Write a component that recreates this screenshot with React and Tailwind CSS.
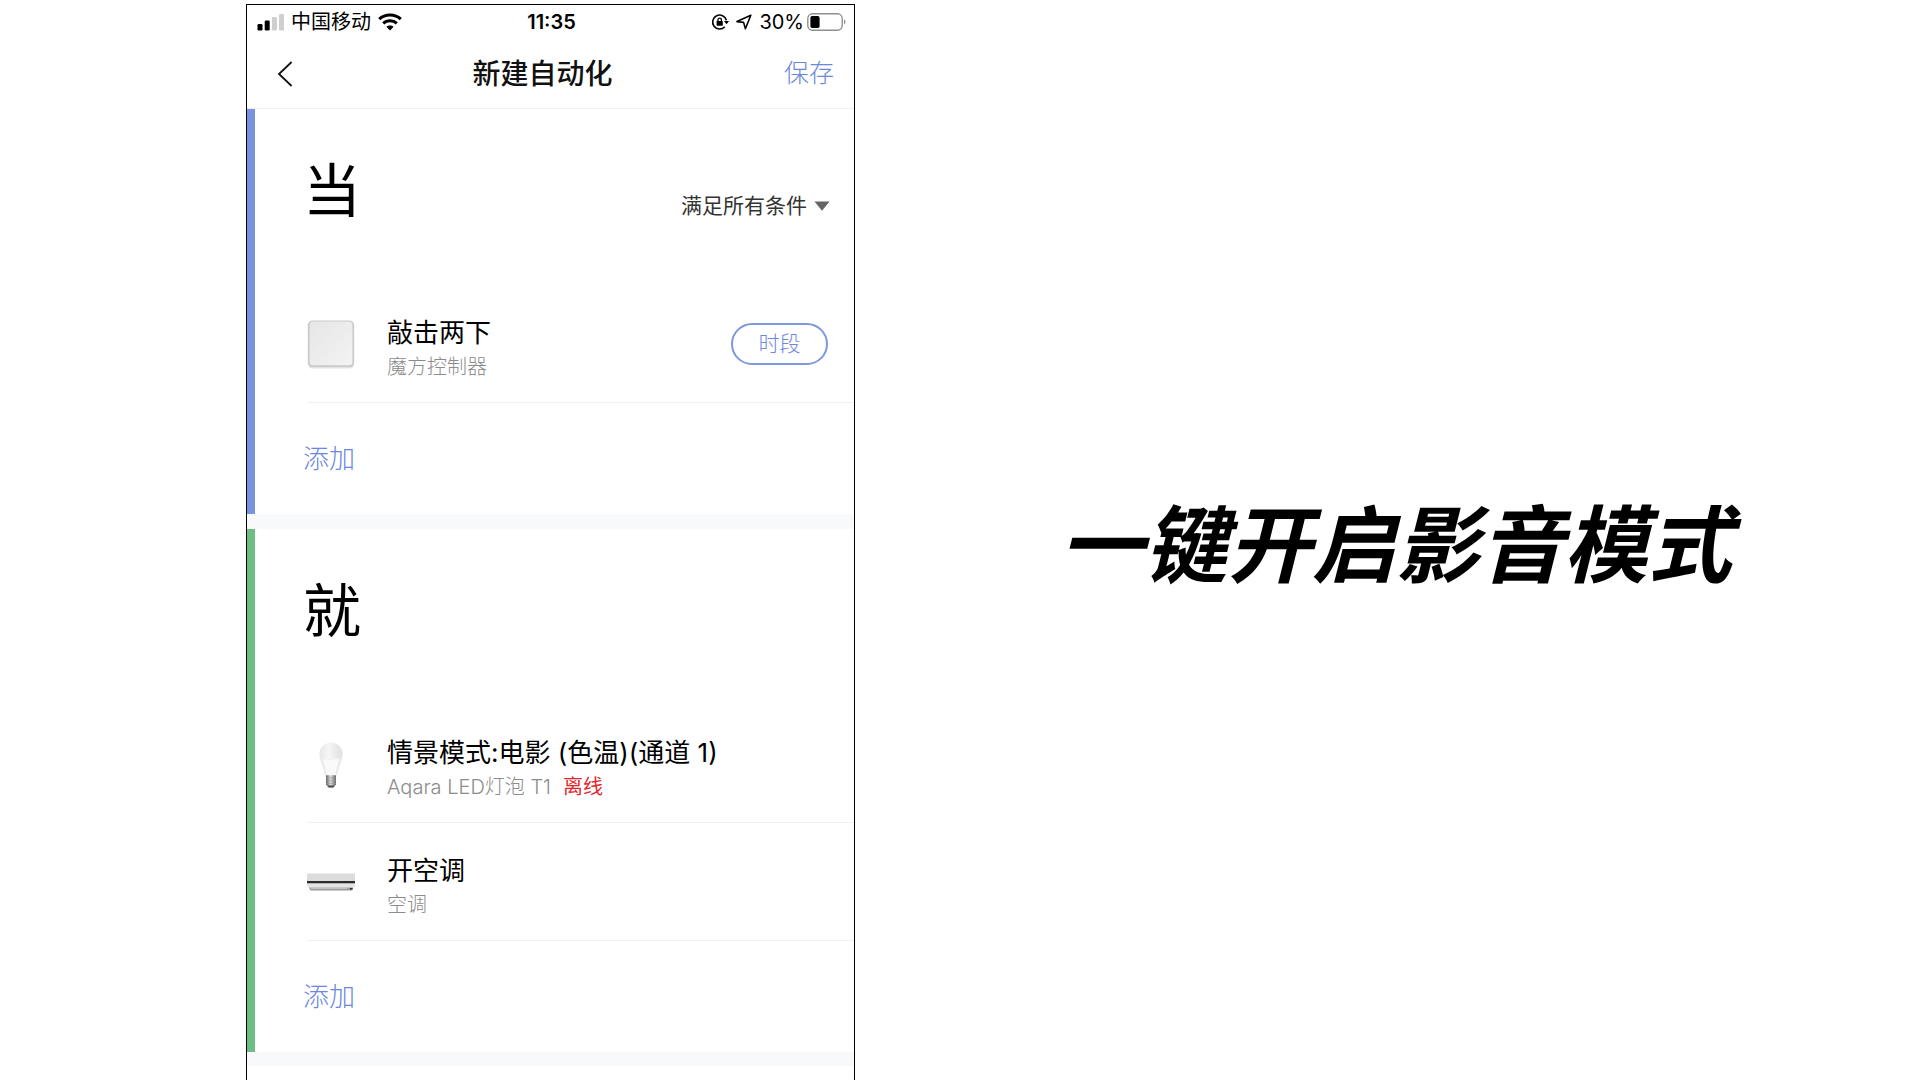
import React, { useState } from 'react';

const SignalIcon = () => (
  <svg width="27" height="18" viewBox="0 0 27 18" aria-hidden="true">
    <rect x="0.5" y="11" width="5" height="6.5" rx="1.2" fill="#000" />
    <rect x="7.7" y="7.5" width="5" height="10" rx="1.2" fill="#000" />
    <rect x="15" y="4" width="5" height="13.5" rx="1.2" fill="#cfcfcf" />
    <rect x="22" y="1" width="5" height="16.5" rx="1.2" fill="#cfcfcf" />
  </svg>
);

const WifiIcon = () => (
  <svg width="24" height="18" viewBox="0 0 24 18" fill="none" stroke="#000" strokeWidth="3" aria-hidden="true">
    <path d="M1.2 6.2 C7 0.6 17 0.6 22.8 6.2" />
    <path d="M5.2 10.4 C9 6.8 15 6.8 18.8 10.4" />
    <path d="M12 17.4 L8.4 13.8 C10.4 11.9 13.6 11.9 15.6 13.8 Z" fill="#000" stroke="none" />
  </svg>
);

const RotationLockIcon = () => (
  <svg width="18" height="18" viewBox="0 0 18 18" fill="none" stroke="#000" aria-hidden="true">
    <path d="M15.4 7.2 A7 7 0 1 0 13.8 13.8" strokeWidth="1.6" />
    <path d="M13 8 H18 L15.6 11.2 Z" fill="#000" stroke="none" />
    <rect x="5.6" y="8" width="6.2" height="4.8" rx="0.6" fill="#000" stroke="none" />
    <path d="M7 8.2 V6.8 A1.7 1.7 0 0 1 10.4 6.8 V8.2" strokeWidth="1.3" />
  </svg>
);

const LocationIcon = () => (
  <svg width="16" height="16" viewBox="0 0 16 16" fill="none" stroke="#000" strokeWidth="1.6" strokeLinejoin="round" aria-hidden="true">
    <path d="M14.8 1.2 L1 7.6 L7.6 8.4 L9.4 14.8 Z" />
  </svg>
);

const BatteryIcon = () => (
  <svg width="39" height="18" viewBox="0 0 39 18" aria-hidden="true">
    <rect x="0.8" y="0.8" width="34.4" height="16.4" rx="4.6" fill="none" stroke="#8f8f8f" strokeWidth="1.4" />
    <rect x="3.4" y="3" width="9.2" height="12" rx="1.8" fill="#000" />
    <path d="M37 6.6 C39 7.4 39 10.6 37 11.4 Z" fill="#8f8f8f" />
  </svg>
);

const CubeImage = () => (
  <svg width="48" height="50" viewBox="0 0 48 50" aria-hidden="true">
    <defs>
      <linearGradient id="cubeFace" x1="0" y1="0" x2="1" y2="1">
        <stop offset="0" stopColor="#e6e6e6" />
        <stop offset="1" stopColor="#f3f3f3" />
      </linearGradient>
    </defs>
    <rect x="1" y="3.5" width="46" height="46" rx="4.5" fill="#e2e2e2" />
    <rect x="0.8" y="1.6" width="46.4" height="46.4" rx="4.5" fill="#cbcbcb" />
    <rect x="2.6" y="2.6" width="42.8" height="43.6" rx="3.5" fill="url(#cubeFace)" />
  </svg>
);

const BulbImage = () => (
  <svg width="48" height="48" viewBox="0 0 48 48" aria-hidden="true">
    <defs>
      <linearGradient id="bulbGlass" x1="0" y1="0" x2="1" y2="0">
        <stop offset="0" stopColor="#e6e6e6" />
        <stop offset="0.4" stopColor="#f6f6f6" />
        <stop offset="1" stopColor="#dfdfdf" />
      </linearGradient>
      <linearGradient id="bulbBase" x1="0" y1="0" x2="1" y2="0">
        <stop offset="0" stopColor="#5c5c5c" />
        <stop offset="0.45" stopColor="#dedede" />
        <stop offset="1" stopColor="#666" />
      </linearGradient>
    </defs>
    <path d="M12.4 14.4 A11.6 12 0 0 1 35.6 14.4 L35 18 H13 Z" fill="url(#bulbGlass)" />
    <path d="M12.6 17 C18 19 30 19 35.4 17 C35 23 31.6 26 30.6 35.2 H17.6 C16.6 26 13 23 12.6 17 Z" fill="#ececec" />
    <path d="M16 19 C21 20 27 20 32 19 C31 25 29 28 28.6 35 H19.6 C19.2 28 17 25 16 19 Z" fill="#fafafa" />
    <path d="M19 35.2 H29 V44.2 L26.8 47.4 H21.2 L19 44.2 Z" fill="url(#bulbBase)" />
    <path d="M19 37.8 H29 M19 40.6 H29 M19 43.4 H29" stroke="#999" strokeWidth="0.6" />
    <path d="M20.6 45.6 H27.4 L26 47.6 H22 Z" fill="#444" />
  </svg>
);

const AirConditionerImage = () => (
  <svg width="48" height="18" viewBox="0 0 48 18" aria-hidden="true">
    <rect x="0" y="0.5" width="48" height="9" fill="#dcdcdc" />
    <rect x="0" y="8" width="48" height="2.6" fill="#2c2c2c" />
    <path d="M0 10.6 H48 V12.6 Q47.6 14.4 46 15 H2 Q0.4 14.4 0 12.6 Z" fill="#e4e4e4" />
    <path d="M2 14.4 H46 L45 17.6 H3.4 Z" fill="#9c9c9c" />
    <path d="M4 15.2 H40" stroke="#d4d4d4" strokeWidth="1" />
    <rect x="43" y="15" width="2.6" height="1.6" fill="#333" />
  </svg>
);

const whenItems = [
  { id: 'cube', title: '敲击两下', device: '魔方控制器', image: CubeImage, period: true },
];

const thenItems = [
  { id: 'bulb', title: '情景模式:电影 (色温)(通道 1)', device: 'Aqara LED灯泡 T1', image: BulbImage, offline: true },
  { id: 'ac', title: '开空调', device: '空调', image: AirConditionerImage },
];

const StatusBar = () => (
  <div className="grid h-[34px] grid-cols-[1fr_auto_1fr] items-center pr-2 pl-2.5 text-xl">
    <div className="flex items-center gap-[7px]">
      <SignalIcon />
      <span>中国移动</span>
      <WifiIcon />
    </div>
    <span className="font-semibold">11:35</span>
    <div className="flex items-center justify-end gap-[7px]">
      <RotationLockIcon />
      <LocationIcon />
      <div className="flex items-center gap-[3px]">
        <span>30%</span>
        <BatteryIcon />
      </div>
    </div>
  </div>
);

const NavBar = () => (
  <header className="flex h-[70px] items-center justify-between border-b border-[#f1f1f1] px-5">
    <button type="button" aria-label="返回" className="flex h-10 w-[34px] items-center justify-end pr-2">
      <svg width="16" height="26" viewBox="0 0 16 26" fill="none" stroke="#111" strokeWidth="1.8">
        <path d="M14.6 1 L2 13 L14.6 25" />
      </svg>
    </button>
    <h1 className="text-[28px] font-medium text-[#111]">新建自动化</h1>
    <button type="button" className="text-[25px] font-light text-[#6c87dc]">保存</button>
  </header>
);

const AutomationItem = ({ item }) => {
  const Image = item.image;
  return (
    <li className="ml-[52px] flex h-[118px] items-center border-b border-[#f1f1f1] pr-[26px]">
      <Image />
      <div className="ml-8 flex-1 pt-2.5">
        <p className="text-[26px] leading-9 text-black">{item.title}</p>
        <p className="text-xl leading-8 font-light text-[#8c8c8c]">
          {item.device}
          {item.offline && <span className="ml-3 font-normal text-[#e0282c]">离线</span>}
        </p>
      </div>
      {item.period && (
        <button type="button" className="h-[42px] w-[97px] rounded-full border-2 border-[#7f97dc] text-[21px] font-light text-[#6c87dc]">
          时段
        </button>
      )}
    </li>
  );
};

const AutomationSection = ({ heading, items, barColor, children }) => (
  <section className={`border-l-8 ${barColor}`}>
    <div className="flex h-[176px] items-start justify-between pt-12 pr-6 pl-12">
      <h2 className="text-[58px] leading-[68px] text-black">{heading}</h2>
      {children}
    </div>
    <ul>
      {items.map((item) => (
        <AutomationItem key={item.id} item={item} />
      ))}
    </ul>
    <div className="flex h-[111px] items-center pl-12">
      <button type="button" className="text-[26px] font-light text-[#6c87dc]">添加</button>
    </div>
  </section>
);

const App = () => {
  const [condition, setCondition] = useState('all');

  return (
    <div className="grid min-h-screen grid-cols-[246fr_609fr_1065fr] bg-white pt-1 font-[Inter,'Noto_Sans_CJK_SC',sans-serif] text-black">
      {/* Phone screen */}
      <div className="col-start-2 border-x border-t border-black">
        <StatusBar />
        <NavBar />
        <main>
          <AutomationSection heading="当" items={whenItems} barColor="border-[#7893e0]">
            <div className="mt-7 flex items-center gap-[7px]">
              <select
                aria-label="条件"
                value={condition}
                onChange={(e) => setCondition(e.target.value)}
                className="appearance-none text-[21px] leading-[42px] text-[#333]"
              >
                <option value="all">满足所有条件</option>
              </select>
              <svg width="16" height="10" viewBox="0 0 16 10" className="pointer-events-none" aria-hidden="true">
                <path d="M0.5 0.5 H15.5 L8 9.8 Z" fill="#666" />
              </svg>
            </div>
          </AutomationSection>
          <div className="h-[15px] bg-[#f8f9fb]" />
          <AutomationSection heading="就" items={thenItems} barColor="border-[#6cbf84]" />
          <div className="h-[14px] bg-[#f8f9fb]" />
        </main>
      </div>

      {/* Caption */}
      <div className="flex items-center justify-center pt-2 pl-4">
        <p className="text-[84px] leading-none font-bold whitespace-nowrap italic">一键开启影音模式</p>
      </div>
    </div>
  );
};

export default App;
